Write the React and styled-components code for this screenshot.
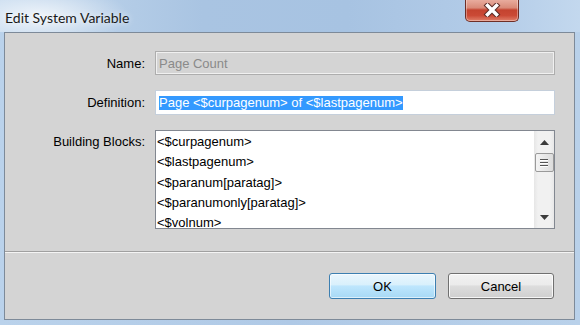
import React from "react";
import styled, { createGlobalStyle } from "styled-components";

const GlobalStyle = createGlobalStyle`
  html, body {
    margin: 0;
    padding: 0;
    width: 580px;
    height: 325px;
    overflow: hidden;
  }
  body {
    font-family: "Liberation Sans", Arial, sans-serif;
  }
`;

const Window = styled.div`
  width: 580px;
  height: 325px;
  display: flex;
  flex-direction: column;
  background: linear-gradient(90deg, #bad2eb 0%, #afc9e6 50%, #b9d1ea 100%);
`;

const TitleBar = styled.div`
  height: 32px;
  flex: none;
  display: flex;
  align-items: flex-start;
  background:
    radial-gradient(ellipse 90px 30px at 40px 16px, rgba(255,255,255,0.75), rgba(255,255,255,0) 100%),
    linear-gradient(90deg, #c4d9ee 0%, #a9c4e2 35%, #a7c3e2 60%, #b3cce8 85%, #c3d8ee 100%);
`;

const Title = styled.div`
  font-family: Lato, "Liberation Sans", sans-serif;
  font-size: 14px;
  color: #1a1a1a;
  padding: 9px 0 0 5px;
  flex: 1;
  text-shadow: 0 0 6px rgba(255,255,255,0.9);
`;

const CloseButton = styled.div`
  width: 52px;
  height: 22px;
  margin-right: 61px;
  margin-top: -1px;
  border: 1px solid #6e2e26;
  border-top: none;
  border-radius: 0 0 5px 5px;
  background: linear-gradient(180deg, #eab0a2 0%, #d98a78 40%, #c4432f 50%, #cb4a36 75%, #e0806a 100%);
  display: flex;
  align-items: center;
  justify-content: center;
  box-shadow: inset 0 0 0 1px rgba(255,255,255,0.35);
`;

const Client = styled.div`
  flex: 1;
  margin: 0 5px 5px 4px;
  border: 1px solid #7d8a99;
  background: #d4d4d4;
  display: flex;
  flex-direction: column;
`;

const Form = styled.div`
  display: grid;
  grid-template-columns: 140px 400px;
  column-gap: 10px;
  row-gap: 15px;
  padding: 18px 0 22px 0;
  border-bottom: 1px solid #a0a0a0;
  box-shadow: 0 1px 0 #f4f4f4;
`;

const Label = styled.div`
  font-size: 13px;
  color: #000;
  text-align: right;
  align-self: ${p => (p.$top ? "start" : "center")};
  padding-top: ${p => (p.$top ? "4px" : "0")};
`;

const TextBox = styled.div`
  box-sizing: border-box;
  height: ${p => p.$h}px;
  border: 1px solid ${p => (p.$disabled ? "#adadad" : "#c5cfdb")};
  background: ${p => (p.$disabled ? "#d4d4d4" : "#fff")};
  box-shadow: ${p => (p.$disabled ? "inset 0 0 0 1px #f0f0f0" : "none")};
  font-size: 13px;
  color: ${p => (p.$disabled ? "#8a8a8a" : "#000")};
  padding: 0 3px;
  display: flex;
  align-items: center;
  white-space: nowrap;
`;

const Selected = styled.span`
  background: #3399ff;
  color: #fff;
  line-height: 14px;
`;

const ListBox = styled.div`
  box-sizing: border-box;
  height: 99px;
  border: 1px solid #828790;
  background: #fff;
  display: flex;
  overflow: hidden;
`;

const Items = styled.div`
  flex: 1;
  padding: 1px 0 0 1px;
`;

const Item = styled.div`
  font-size: 13px;
  line-height: 20.25px;
  height: 20.25px;
  color: #000;
  white-space: nowrap;
`;

const ScrollBar = styled.div`
  width: 20px;
  flex: none;
  background: linear-gradient(90deg, #e6e6e6 0%, #f1f1f1 20%, #f1f1f1 80%, #e8e8e8 100%);
  display: flex;
  flex-direction: column;
  align-items: center;
`;

const Arrow = styled.div`
  height: 22px;
  display: flex;
  align-items: center;
  justify-content: center;
`;

const Thumb = styled.div`
  box-sizing: border-box;
  width: 19px;
  height: 19px;
  border: 1px solid #9a9a9a;
  border-radius: 2px;
  background: linear-gradient(90deg, #f4f4f4 0%, #e8e8e8 50%, #dcdcdc 100%);
  display: flex;
  flex-direction: column;
  align-items: center;
  justify-content: center;
  gap: 2px;
`;

const Grip = styled.div`
  width: 8px;
  height: 1px;
  background: #555;
  box-shadow: 0 1px 0 #fff;
`;

const Track = styled.div`
  flex: 1;
`;

const ButtonRow = styled.div`
  display: flex;
  justify-content: flex-end;
  gap: 12px;
  padding: 21px 20px 0 0;
`;

const Button = styled.button`
  box-sizing: border-box;
  width: ${p => p.$w}px;
  height: 26px;
  font-family: "Liberation Sans", Arial, sans-serif;
  font-size: 13px;
  color: #000;
  border-radius: 3px;
  border: 1px solid ${p => (p.$default ? "#3c7fb1" : "#707070")};
  background: ${p =>
    p.$default
      ? "linear-gradient(180deg, #eaf6fd 0%, #d9f0fc 45%, #bee6fd 50%, #a7d9f5 100%)"
      : "linear-gradient(180deg, #f2f2f2 0%, #ebebeb 45%, #dddddd 50%, #cfcfcf 100%)"};
  box-shadow: inset 0 0 0 1px ${p => (p.$default ? "rgba(255,255,255,0.6)" : "rgba(255,255,255,0.8)")};
  padding: 0;
`;

const items = [
  "<$curpagenum>",
  "<$lastpagenum>",
  "<$paranum[paratag]>",
  "<$paranumonly[paratag]>",
  "<$volnum>",
];

const CloseIcon = () => (
  <svg width="18" height="14" viewBox="0 0 18 14">
    <path d="M4.5 2.5 L13.5 11.5 M13.5 2.5 L4.5 11.5" stroke="#5a2a24" strokeWidth="5.5" strokeLinecap="square" />
    <path d="M4.5 2.5 L13.5 11.5 M13.5 2.5 L4.5 11.5" stroke="#ffffff" strokeWidth="3.5" strokeLinecap="square" />
  </svg>
);

const Triangle = ({ up }) => (
  <svg width="9" height="5" viewBox="0 0 9 5">
    <path d={up ? "M0 5 L4.5 0 L9 5 Z" : "M0 0 L4.5 5 L9 0 Z"} fill="#3c3c3c" />
  </svg>
);

export default function App() {
  return (
    <Window>
      <GlobalStyle />
      <TitleBar>
        <Title>Edit System Variable</Title>
        <CloseButton>
          <CloseIcon />
        </CloseButton>
      </TitleBar>
      <Client>
        <Form>
          <Label>Name:</Label>
          <TextBox $h={24} $disabled>Page Count</TextBox>
          <Label>Definition:</Label>
          <TextBox $h={25}>
            <Selected>Page &lt;$curpagenum&gt; of &lt;$lastpagenum&gt;</Selected>
          </TextBox>
          <Label $top>Building Blocks:</Label>
          <ListBox>
            <Items>
              {items.map(t => (
                <Item key={t}>{t}</Item>
              ))}
            </Items>
            <ScrollBar>
              <Arrow><Triangle up /></Arrow>
              <Thumb>
                <Grip />
                <Grip />
                <Grip />
              </Thumb>
              <Track />
              <Arrow><Triangle /></Arrow>
            </ScrollBar>
          </ListBox>
        </Form>
        <ButtonRow>
          <Button $w={107} $default>OK</Button>
          <Button $w={106}>Cancel</Button>
        </ButtonRow>
      </Client>
    </Window>
  );
}
